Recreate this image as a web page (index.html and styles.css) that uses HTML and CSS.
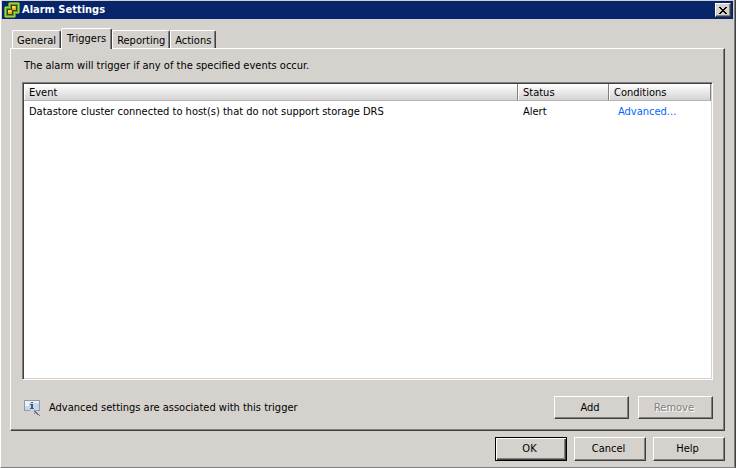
FILE: index.html
```html
<!DOCTYPE html>
<html lang="en">
<head>
  <meta charset="UTF-8">
  <meta name="viewport" content="width=device-width, initial-scale=1.0">
  <title>Alarm Settings</title>
  <link rel="stylesheet" href="styles.css">
</head>
<body>
  <div class="dialog">
    <header class="title-bar">
      <svg class="app-icon" width="16" height="16" viewBox="0 0 16 16" shape-rendering="crispEdges">
        <path fill="#5a9a28" d="M5 0h10v1h1v10h-1v1h-3v3h-1v1H1v-1H0V5h1V4h3V1h1z"/>
        <path fill="#9ad055" d="M5 1h10v10h-4v4H1V5h4z"/>
        <path fill="#5a9a28" d="M6 2h8v8h-4v4H2V6h4z"/>
        <path fill="#33480f" d="M7 3h6v6H9v4H3V7h4z"/>
        <path fill="#f7a420" d="M8 4h4v4H8zM4 8h4v4H4z"/>
        <path fill="#ffd15c" d="M8 4h3v2H8zM4 8h3v2H4z"/>
        <path fill="#33480f" d="M7 7h1v1H7zM8 8h1v1H8z"/>
      </svg>
      <h1>Alarm Settings</h1>
      <button class="close" type="button" aria-label="Close">
        <svg width="8" height="7" viewBox="0 0 8 7" shape-rendering="crispEdges">
          <path d="M0 0h2v1h1v1h2V1h1V0h2v1H7v1H6v1H5v1h1v1h1v1h1v1H6V6H5V5H3v1H2v1H0V6h1V5h1V4h1V3H2V2H1V1H0z"/>
        </svg>
      </button>
    </header>

    <main>
      <div class="tabs" role="tablist">
        <button class="tab" type="button" role="tab" aria-selected="false">General</button>
        <button class="tab active" type="button" role="tab" aria-selected="true">Triggers</button>
        <button class="tab" type="button" role="tab" aria-selected="false">Reporting</button>
        <button class="tab" type="button" role="tab" aria-selected="false">Actions</button>
      </div>

      <section class="panel" role="tabpanel">
        <p class="intro">The alarm will trigger if any of the specified events occur.</p>

        <div class="list">
          <table>
            <thead>
              <tr>
                <th>Event</th>
                <th class="status">Status</th>
                <th class="conditions">Conditions</th>
              </tr>
            </thead>
            <tbody>
              <tr>
                <td>Datastore cluster connected to host(s) that do not support storage DRS</td>
                <td>Alert</td>
                <td class="link-cell"><a href="#">Advanced...</a></td>
              </tr>
            </tbody>
          </table>
        </div>

        <div class="panel-footer">
          <svg class="info-icon" width="16" height="16" viewBox="0 0 16 16" shape-rendering="crispEdges">
            <path fill="#96989e" d="M0 0h16v11H0z"/>
            <path fill="#c3d8f7" d="M1 1h14v9H1z"/>
            <path fill="#eaf1fc" d="M1 1h14v2H1zM1 3h4v3H1z"/>
            <path fill="#b9d0f2" d="M6 10h4v1h1v1h1v1h1v1h-2v-1H9v-1H7v-1H6z"/>
            <path fill="#6f7278" d="M5 11h2v1h2v1h2v1h2v1h2v1h1v-1h-1v-1h-1v-1h-1v-1h-1v-1h-2v1h1v1h1v1h-2v-1H9v-1H7v-1H5z"/>
            <path fill="#55585f" d="M7 2h2v1H7zM6 4h3v4h1v1H6V8h1V5H6z"/>
          </svg>
          <span class="note">Advanced settings are associated with this trigger</span>
          <button class="btn" type="button">Add</button>
          <button class="btn" type="button" disabled>Remove</button>
        </div>
      </section>
    </main>

    <footer class="actions">
      <button class="btn default" type="button">OK</button>
      <button class="btn" type="button">Cancel</button>
      <button class="btn" type="button">Help</button>
    </footer>
  </div>
</body>
</html>
```
FILE: styles.css
```css
* {
  box-sizing: border-box;
}

body {
  margin: 0;
  background-color: #d5d2cd;
  color: #000;
  font-family: Tahoma, "DejaVu Sans Condensed", sans-serif;
  font-size: 11px;
  line-height: 14px;
}

button {
  font: inherit;
  color: inherit;
  background-color: #d5d2cd;
}

.dialog {
  display: flex;
  flex-direction: column;
  min-height: 100vh;
  padding: 0 2px 0 1px;
  border-left: 1px solid #fff;
  border-right: 1px solid #404040;
  border-bottom: 1px solid #808080;
  box-shadow: inset -1px 0 #808080;
}

.title-bar {
  display: flex;
  align-items: center;
  height: 18px;
  margin-top: 1px;
  padding: 0 2px;
  background-color: #08246b;
  color: #fff;
}

.title-bar h1 {
  flex: 1;
  margin: 0 0 0 2px;
  font-size: 11px;
  line-height: 16px;
}

.close {
  display: flex;
  align-items: center;
  justify-content: center;
  width: 16px;
  height: 14px;
  padding: 0;
  border: 1px solid;
  border-color: #fff #404040 #404040 #fff;
  box-shadow: inset -1px -1px #808080;
}

main {
  flex: 1;
  display: flex;
  flex-direction: column;
  padding: 9px 8px 0;
}

.tabs {
  display: flex;
  align-items: flex-end;
  padding-left: 2px;
}

.tab {
  height: 18px;
  padding: 2px 4px 0;
  border: 1px solid;
  border-color: #fff #404040 transparent #fff;
  border-bottom: 0;
  border-radius: 2px 2px 0 0;
  box-shadow: inset -1px 0 #808080;
}

.tab.active {
  height: 21px;
  margin-bottom: -1px;
  padding: 0 5px 1px;
  z-index: 1;
}

.panel {
  flex: 1;
  display: flex;
  flex-direction: column;
  padding: 10px 11px 11px;
  border: 1px solid;
  border-color: #fff #404040 #404040 #fff;
  box-shadow: inset -1px -1px #808080;
}

.intro {
  margin: 0 2px 9px;
}

.list {
  flex: 1;
  border: 1px solid;
  border-color: #808080 #fff #fff #808080;
  background-color: #fff;
  box-shadow: inset 1px 1px #404040, inset -1px -1px #d5d2cd;
  padding: 1px;
}

table {
  width: 100%;
  table-layout: fixed;
  border-collapse: separate;
  border-spacing: 0;
}

th {
  height: 17px;
  padding: 1px 5px 0;
  border-right: 1px solid #808080;
  border-bottom: 1px solid #b5b5b5;
  background: linear-gradient(#fff, #d5d2d2);
  box-shadow: inset 1px 0 #fff;
  font-weight: normal;
  text-align: left;
}

td {
  height: 20px;
  padding: 1px 5px 0;
}

.status {
  width: 91px;
}

.conditions {
  width: 102px;
}

.link-cell {
  padding-left: 9px;
}

a {
  color: #0066ff;
  text-decoration: none;
}

.panel-footer {
  display: flex;
  align-items: center;
  gap: 9px;
  margin-top: 16px;
  padding-left: 2px;
}

.note {
  flex: 1;
}

.btn {
  width: 75px;
  height: 23px;
  padding: 0 3px 0 0;
  border: 1px solid;
  border-color: #fff #404040 #404040 #fff;
  box-shadow: inset -1px -1px #808080;
}

.btn:disabled {
  color: #808080;
  text-shadow: 1px 1px #fff;
}

.actions {
  display: flex;
  justify-content: flex-end;
  gap: 7px;
  padding: 6px 8px;
}

.actions .btn {
  width: 72px;
  height: 24px;
}

.btn.default {
  border-color: #000;
  box-shadow: inset 1px 1px #fff, inset -1px -1px #404040, inset -2px -2px #808080;
}
```
